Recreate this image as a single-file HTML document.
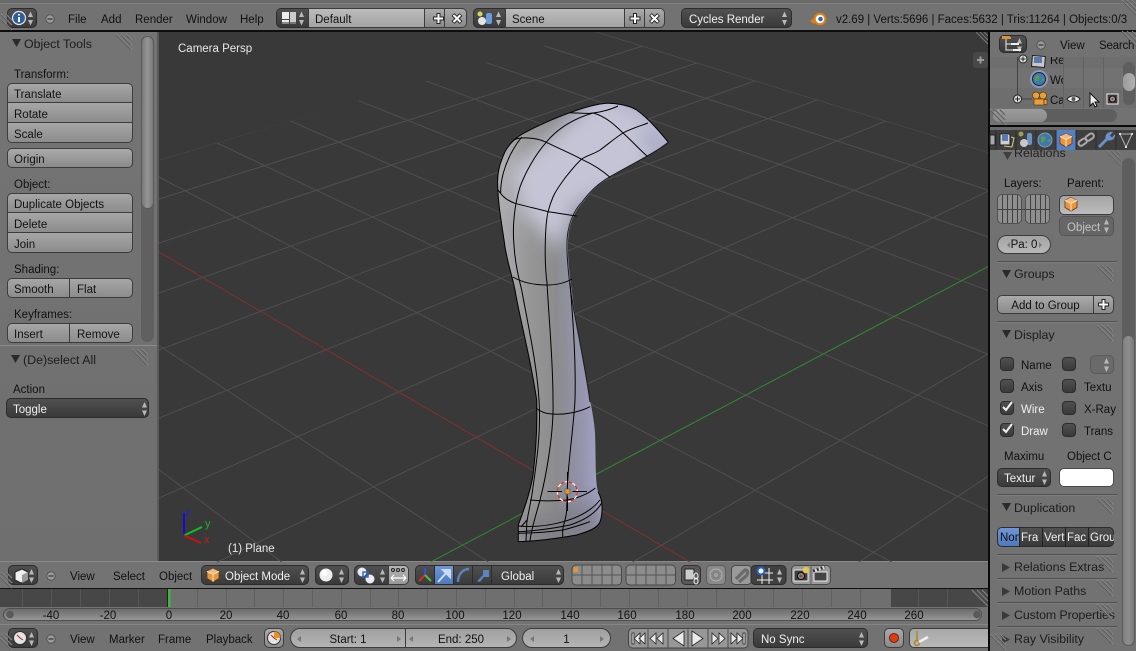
<!DOCTYPE html>
<html><head><meta charset="utf-8"><style>
html,body{margin:0;padding:0;width:1136px;height:651px;overflow:hidden;background:#727272}
#r{position:absolute;left:0;top:0;width:1136px;height:651px;overflow:hidden}
div,span{position:absolute;box-sizing:border-box}
.t{white-space:nowrap;font:11.5px/14px "Liberation Sans","DejaVu Sans",sans-serif;color:#111;margin-top:1px}
.h{font-size:12.4px;color:#1c1c1c}
.c{text-align:center}
.wh{color:#f0f0f0}
.w{background:linear-gradient(#aaaaaa,#8a8a8a);border:1px solid #3c3c3c;border-radius:5px}
.m{background:linear-gradient(#a6a6a6,#8c8c8c);border:1px solid #3c3c3c}
.d{background:linear-gradient(#505050,#3a3a3a);border:1px solid #2c2c2c;border-radius:5px}
.dv{left:997px;width:120px;background:#505050;border-bottom:1px solid #7e7e7e;height:2px}
</style></head><body><div id="r">
<!-- backgrounds -->
<div style="left:0;top:0;width:1136px;height:4px;background:#6a6a6a;border-bottom:1px solid #808080"></div>
<div style="left:0;top:30px;width:1136px;height:2px;background:#0e0e0e"></div>
<div style="left:0;top:32px;width:158px;height:530px;background:linear-gradient(#747474,#6f6f6f)"></div>
<div style="left:157px;top:32px;width:2px;height:530px;background:#5a5a5a"></div>
<div style="left:988px;top:30px;width:2px;height:621px;background:#0a0a0a"></div>
<div style="left:159px;top:32px;width:829px;height:530px;background:#393939"></div>
<div style="left:0;top:561px;width:988px;height:27px;background:#737373;border-top:1px solid #8a8a8a"></div>
<div style="left:0;top:588px;width:988px;height:1px;background:#111"></div>
<div style="left:0;top:589px;width:988px;height:18px;background:#6f6f6f"></div>
<div style="left:0;top:589px;width:168px;height:18px;background:#474747"></div>
<div style="left:891px;top:589px;width:97px;height:18px;background:#474747"></div>
<div style="left:0;top:607px;width:988px;height:18px;background:#737373"></div>
<div style="left:0;top:624px;width:988px;height:1px;background:#858585"></div>
<div style="left:3px;top:608px;width:979px;height:13px;border-radius:7px;background:linear-gradient(#6c6c6c,#959595);border:1px solid #4e4e4e"></div>
<div style="left:990px;top:32px;width:146px;height:94px;background:#727272"></div>
<div style="left:990px;top:57px;width:146px;height:11px;background:#6e6e6e"></div>
<div style="left:990px;top:68px;width:146px;height:20px;background:#727272"></div>
<div style="left:990px;top:88px;width:146px;height:20px;background:#6e6e6e"></div>
<div style="left:990px;top:125px;width:146px;height:2px;background:#0a0a0a"></div>
<div style="left:990px;top:127px;width:146px;height:24px;background:#6a6a6a"></div>
<div style="left:990px;top:130px;width:146px;height:20px;background:#3f3f3f"></div>
<div style="left:1056px;top:130px;width:20px;height:20px;background:#5680c2"></div>
<div style="left:990px;top:150px;width:146px;height:501px;background:#727272"></div>
<!-- scrollbars -->
<div style="left:141px;top:36px;width:13px;height:306px;border-radius:7px;background:#606060"></div>
<div style="left:141px;top:36px;width:13px;height:173px;border-radius:7px;background:linear-gradient(90deg,#787878,#949494,#7a7a7a);border:1px solid #5a5a5a"></div>
<div style="left:0;top:345px;width:157px;height:1px;background:#8c8c8c"></div>
<div style="left:1123px;top:62px;width:12px;height:43px;border-radius:6px;background:#5e5e5e"></div>
<div style="left:1123px;top:73px;width:12px;height:18px;border-radius:6px;background:linear-gradient(90deg,#9c9c9c,#b0b0b0)"></div>
<div style="left:993px;top:109px;width:124px;height:13px;border-radius:7px;background:#5e5e5e"></div>
<div style="left:993px;top:109px;width:54px;height:13px;border-radius:7px;background:linear-gradient(#9c9c9c,#8a8a8a)"></div>
<div style="left:1122px;top:158px;width:13px;height:488px;border-radius:7px;background:#5e5e5e"></div>
<div style="left:1122px;top:335px;width:13px;height:311px;border-radius:7px;background:linear-gradient(90deg,#808080,#8e8e8e,#7a7a7a);border:1px solid #5a5a5a"></div>

<!-- 3D view SVG -->
<svg style="position:absolute;left:159px;top:32px" width="829" height="530" viewBox="159 32 829 530">
<defs>
<clipPath id="g"><polygon points="594,31 1000,156 1000,600 159,600 159,160"/></clipPath>
<linearGradient id="b" gradientUnits="userSpaceOnUse" x1="498" y1="0" x2="604" y2="0"><stop offset="0" stop-color="#aeaeb2"/><stop offset=".3" stop-color="#969696"/><stop offset=".55" stop-color="#8c8c8e"/><stop offset=".8" stop-color="#9090a6"/><stop offset="1" stop-color="#a8a8c8"/></linearGradient>
<filter id="bl" x="-30%" y="-30%" width="160%" height="160%"><feGaussianBlur stdDeviation="9"/></filter>
<clipPath id="sil"><path d="M668.3,142.3 C660,132 648,118 636.7,110 C628,105 615,103 606.7,103.3 C595,104 580,109 570,112.7 C555,118 535,127 526.7,131.7 C515,137 508,146 505,151.7 C500,163 497,172 497.7,185 C498,205 502,225 505,246.7 C508,265 512,275 515,290 C520,320 530,355 536.7,400 C537,420 537,440 533.3,473 C531,490 524,510 518.3,525 L518.3,541.7 C540,541 560,538 576.7,535 C590,531 597,528 600,522 C603,513 603,500 598,491.7 C595,480 596,460 595,433 C594,420 592,410 590,400 C585,365 576,325 571.7,290 C569,270 567,250 568.3,236.7 C570,220 577,208 583.3,201.7 C592,190 600,183 610,177.3 C625,168 645,158 660,148.3 Z"/></clipPath>
</defs>
<g clip-path="url(#g)" stroke="#4f4f4f" stroke-width="1" fill="none">
<path d="M2533,-552L159,160M2533,-552L159,199M2533,-552L159,243M2533,-552L159,293M2533,-552L159,350M2533,-552L159,418M2533,-552L159,498M2533,-552L159,590M2533,-552L568,600M2533,-552L802,600"/>
<path d="M-1122,-496L1000,156M-1122,-496L1000,194M-1122,-496L1000,241M-1122,-496L1000,295M-1122,-496L1000,359M-1122,-496L1000,431M-1122,-496L1000,516.5M-1122,-496L964,600M-1122,-496L546,600M-1122,-496L332,600"/>
<path d="M-1122,-496L755,600" stroke="#843030"/>
<path d="M2533,-552L359,600" stroke="#2f8a2f"/>
</g>
<!-- mesh -->
<path d="M668.3,142.3 C660,132 648,118 636.7,110 C628,105 615,103 606.7,103.3 C595,104 580,109 570,112.7 C555,118 535,127 526.7,131.7 C515,137 508,146 505,151.7 C500,163 497,172 497.7,185 C498,205 502,225 505,246.7 C508,265 512,275 515,290 C520,320 530,355 536.7,400 C537,420 537,440 533.3,473 C531,490 524,510 518.3,525 L518.3,541.7 C540,541 560,538 576.7,535 C590,531 597,528 600,522 C603,513 603,500 598,491.7 C595,480 596,460 595,433 C594,420 592,410 590,400 C585,365 576,325 571.7,290 C569,270 567,250 568.3,236.7 C570,220 577,208 583.3,201.7 C592,190 600,183 610,177.3 C625,168 645,158 660,148.3 Z" fill="url(#b)"/>
<g clip-path="url(#sil)">
<path d="M510,170 L600,95 L680,130 L640,175 L575,205 L560,250 L520,210 Z" fill="#c4c4d6" filter="url(#bl)"/>
<path d="M640,120 L675,145 L650,160 Z" fill="#a8a8c4" filter="url(#bl)"/>
<path d="M566,240 L574,240 L596,420 L600,520 L586,520 Z" fill="#a4a4cc" filter="url(#bl)" opacity=".45"/>
<path d="M520,520 L600,500 L604,545 L515,548 Z" fill="#7c7c84" filter="url(#bl)" opacity=".7"/>
</g>
<g fill="none" stroke="#000" stroke-width="1" stroke-linejoin="round">
<path d="M668.3,142.3 C660,132 648,118 636.7,110 C628,105 615,103 606.7,103.3 C595,104 580,109 570,112.7 C555,118 535,127 526.7,131.7 C515,137 508,146 505,151.7 C500,163 497,172 497.7,185 C498,205 502,225 505,246.7 C508,265 512,275 515,290 C520,320 530,355 536.7,400 C537,420 537,440 533.3,473 C531,490 524,510 518.3,525 L518.3,541.7 C540,541 560,538 576.7,535 C590,531 597,528 600,522 C603,513 603,500 598,491.7"/>
<path d="M590,402 C585,365 576,325 570.5,290 C568,270 566,250 567.3,236.7 C569,220 576,208 582.3,201.7 C591,190 599,183 609,177.3 C625,168 645,158 660,148.3 L668.3,142.3" stroke="#1a1a1a"/>
<path d="M513.3,140 C520,137 535,137 545,141.7 C560,149 570,153 581.7,159.3 C592,164 602,170 610,177.3"/>
<path d="M593,113 C605,116 615,125 623,133 C632,141 640,150 647,156"/>
<path d="M570,112.700 C578,113 588,114 593,113 C602,112 612,109 618,106"/>
<path d="M593,113 C575,118 558,128 546.7,141.7 C535,155 525,173 520,187 C515,203 512,225 514,245 C515,262 518,275 521.7,290 C528,325 537,365 539,400 C541,430 537,460 533,487 C531,505 526,520 526.7,527 L526,541"/>
<path d="M648,123 C640,126 630,129 623,133 C615,138 607,145 600,150 C594,154 588,155 581.7,159 C575,165 570,172 565,178 C560,185 556,190 553,197 C550,204 549,208 548,212 C545,225 544,260 547,283 C549,320 553,360 553,400 C554,430 547,473 540,500 C536,515 531,530 530,541"/>
<path d="M521.7,137 C513,148 507,160 503.3,173 C501,182 500.5,188 500.7,193"/>
<path d="M498.3,190 C503,198 509,201 515,203.3 C525,206 538,209 548.3,211.7 C558,213 568,215 576.7,216"/>
<path d="M513,277 C523,283 535,285 547,285 C558,285 565,283 572,279"/>
<path d="M535.7,408 C541,412 546,414 552,414 C565,415 580,412 590,406.7"/>
<path d="M570,283 C573,320 576,360 575,400 C574,420 570,450 568.3,471.7 C567,490 567,500 566.7,510 C566,520 563,525 562.7,530 L562.7,538"/>
<path d="M530,500 C540,501 555,501 567,500 C578,498 588,494 595.3,488"/>
<path d="M518.3,526 C530,527 545,527 563.3,521.7 C580,517 592,510 600,500"/>
<path d="M518.3,531.7 C535,531 550,529 570,525 C585,520 596,513 601.7,503"/>
<path d="M518.3,533.3 C535,533 550,532 563,530 C575,527 583,524 590,521.7"/>
<path d="M521,527 L527,520"/>
</g>
<!-- 3d cursor -->
<circle cx="567.3" cy="491.7" r="10" fill="none" stroke="#fff" stroke-width="1.2"/>
<circle cx="567.3" cy="491.7" r="10" fill="none" stroke="#e02020" stroke-width="1.2" stroke-dasharray="4 4"/>
<path d="M547.5,491.5H562M572.5,491.5H587M567.5,472V486.5M567.5,496.5V511" stroke="#000" fill="none"/>
<rect x="565" y="489" width="5" height="5" fill="#e0943c" stroke="#553" stroke-width=".5"/>
<!-- axes widget -->
<path d="M184,535.5V513" stroke="#1010d0" stroke-width="2"/>
<path d="M184,535.5L202,527" stroke="#10c020" stroke-width="2"/>
<path d="M184,535.5L201,543" stroke="#d01010" stroke-width="2"/>
<!-- plus handle -->
<rect x="973" y="52" width="15" height="16" rx="3" fill="#484848"/>
<path d="M977,60H984M980.5,56.5V63.5" stroke="#9a9a9a" stroke-width="2"/>
<path d="M976,32L988,44M980,32L988,40M984,32L988,36" stroke="#777"/>
</svg>
<span class="t wh" style="left:178px;top:41px;color:#e8e8e8">Camera Persp</span>
<span class="t wh" style="left:228px;top:541px;color:#e8e8e8">(1) Plane</span>
<span class="t" style="left:185px;top:505px;color:#2020d0;font-size:11px">z</span>
<span class="t" style="left:205px;top:516px;color:#20b020;font-size:11px">y</span>
<span class="t" style="left:204px;top:532px;color:#c02020;font-size:11px">x</span>

<!-- top header -->
<div class="d" style="left:7px;top:8px;width:30px;height:20px"></div>
<span class="t" style="left:68px;top:12px">File</span><span class="t" style="left:101px;top:12px">Add</span><span class="t" style="left:135px;top:12px">Render</span><span class="t" style="left:186px;top:12px">Window</span><span class="t" style="left:240px;top:12px">Help</span>
<div class="d" style="left:276px;top:8px;width:33px;height:20px;border-radius:5px 0 0 5px"></div>
<div class="w" style="left:308px;top:8px;width:117px;height:20px;border-radius:0;background:linear-gradient(#bcbcbc,#a4a4a4)"></div>
<span class="t" style="left:315px;top:12px">Default</span>
<div class="w" style="left:424px;top:8px;width:21px;height:20px;border-radius:0"></div>
<div class="w" style="left:444px;top:8px;width:23px;height:20px;border-radius:0 5px 5px 0"></div>
<div class="d" style="left:473px;top:8px;width:33px;height:20px;border-radius:5px 0 0 5px"></div>
<div class="w" style="left:505px;top:8px;width:120px;height:20px;border-radius:0;background:linear-gradient(#bcbcbc,#a4a4a4)"></div>
<span class="t" style="left:512px;top:12px">Scene</span>
<div class="w" style="left:624px;top:8px;width:21px;height:20px;border-radius:0"></div>
<div class="w" style="left:644px;top:8px;width:21px;height:20px;border-radius:0 5px 5px 0"></div>
<div class="d" style="left:681px;top:8px;width:111px;height:20px"></div>
<span class="t wh" style="left:689px;top:12px">Cycles Render</span>
<span class="t" style="left:836px;top:12px;letter-spacing:-.01px">v2.69 | Verts:5696 | Faces:5632 | Tris:11264 | Objects:0/3</span>

<!-- left panel -->
<span class="t h" style="left:24px;top:36px">Object Tools</span>
<span class="t" style="left:14px;top:67px">Transform:</span>
<div class="m" style="left:7px;top:83px;width:126px;height:20px;border-radius:5px 5px 0 0"></div><span class="t" style="left:14px;top:87px">Translate</span>
<div class="m" style="left:7px;top:102px;width:126px;height:21px"></div><span class="t" style="left:14px;top:107px">Rotate</span>
<div class="m" style="left:7px;top:122px;width:126px;height:21px;border-radius:0 0 5px 5px"></div><span class="t" style="left:14px;top:127px">Scale</span>
<div class="w" style="left:7px;top:148px;width:126px;height:20px"></div><span class="t" style="left:14px;top:152px">Origin</span>
<span class="t" style="left:14px;top:177px">Object:</span>
<div class="m" style="left:7px;top:193px;width:126px;height:20px;border-radius:5px 5px 0 0"></div><span class="t" style="left:14px;top:197px">Duplicate Objects</span>
<div class="m" style="left:7px;top:212px;width:126px;height:21px"></div><span class="t" style="left:14px;top:217px">Delete</span>
<div class="m" style="left:7px;top:232px;width:126px;height:21px;border-radius:0 0 5px 5px"></div><span class="t" style="left:14px;top:237px">Join</span>
<span class="t" style="left:14px;top:262px">Shading:</span>
<div class="m" style="left:7px;top:278px;width:63px;height:20px;border-radius:5px 0 0 5px"></div><div class="m" style="left:69px;top:278px;width:64px;height:20px;border-radius:0 5px 5px 0"></div>
<span class="t" style="left:14px;top:282px">Smooth</span><span class="t" style="left:77px;top:282px">Flat</span>
<span class="t" style="left:14px;top:307px">Keyframes:</span>
<div class="m" style="left:7px;top:323px;width:63px;height:20px;border-radius:5px 0 0 5px"></div><div class="m" style="left:69px;top:323px;width:64px;height:20px;border-radius:0 5px 5px 0"></div>
<span class="t" style="left:14px;top:327px">Insert</span><span class="t" style="left:77px;top:327px">Remove</span>
<span class="t h" style="left:23px;top:352px">(De)select All</span>
<span class="t" style="left:13px;top:382px">Action</span>
<div class="d" style="left:6px;top:398px;width:143px;height:20px"></div><span class="t wh" style="left:13px;top:402px">Toggle</span>

<!-- 3D header -->
<div class="d" style="left:8px;top:565px;width:30px;height:20px"></div>
<span class="t" style="left:70px;top:569px">View</span><span class="t" style="left:113px;top:569px">Select</span><span class="t" style="left:159px;top:569px">Object</span>
<div class="d" style="left:201px;top:565px;width:108px;height:20px"></div><span class="t wh" style="left:225px;top:569px">Object Mode</span>
<div class="d" style="left:315px;top:565px;width:34px;height:20px"></div>
<div class="d" style="left:354px;top:565px;width:36px;height:20px;border-radius:5px 0 0 5px"></div>
<div class="w" style="left:388px;top:565px;width:21px;height:20px;border-radius:0 5px 5px 0;background:linear-gradient(#b4b4b4,#989898)"></div>
<div class="d" style="left:415px;top:565px;width:20px;height:20px;border-radius:5px 0 0 5px"></div>
<div style="left:434px;top:565px;width:20px;height:20px;background:linear-gradient(#6f97d6,#4f79bc);border:1px solid #2c2c2c"></div>
<div class="d" style="left:453px;top:565px;width:20px;height:20px;border-radius:0"></div>
<div class="d" style="left:472px;top:565px;width:20px;height:20px;border-radius:0"></div>
<div class="d" style="left:491px;top:565px;width:73px;height:20px;border-radius:0 5px 5px 0"></div><span class="t wh" style="left:501px;top:569px">Global</span>

<!-- timeline numbers -->
<span class="t c" style="left:31px;top:608px;width:40px">-40</span><span class="t c" style="left:88px;top:608px;width:40px">-20</span><span class="t c" style="left:149px;top:608px;width:40px">0</span><span class="t c" style="left:206px;top:608px;width:40px">20</span><span class="t c" style="left:263px;top:608px;width:40px">40</span><span class="t c" style="left:321px;top:608px;width:40px">60</span><span class="t c" style="left:378px;top:608px;width:40px">80</span><span class="t c" style="left:435px;top:608px;width:40px">100</span><span class="t c" style="left:492px;top:608px;width:40px">120</span><span class="t c" style="left:550px;top:608px;width:40px">140</span><span class="t c" style="left:607px;top:608px;width:40px">160</span><span class="t c" style="left:665px;top:608px;width:40px">180</span><span class="t c" style="left:722px;top:608px;width:40px">200</span><span class="t c" style="left:780px;top:608px;width:40px">220</span><span class="t c" style="left:837px;top:608px;width:40px">240</span><span class="t c" style="left:894px;top:608px;width:40px">260</span>

<!-- timeline header -->
<div class="d" style="left:8px;top:628px;width:30px;height:20px"></div>
<span class="t" style="left:70px;top:632px">View</span><span class="t" style="left:109px;top:632px">Marker</span><span class="t" style="left:158px;top:632px">Frame</span><span class="t" style="left:206px;top:632px">Playback</span>
<div class="w" style="left:264px;top:628px;width:20px;height:20px"></div>
<div class="w" style="left:290px;top:628px;width:116px;height:20px;border-radius:10px 0 0 10px;background:linear-gradient(#a0a0a0,#b4b4b4)"></div><span class="t c" style="left:290px;top:632px;width:116px">Start: 1</span>
<div class="w" style="left:405px;top:628px;width:112px;height:20px;border-radius:0 10px 10px 0;background:linear-gradient(#a0a0a0,#b4b4b4)"></div><span class="t c" style="left:405px;top:632px;width:112px">End: 250</span>
<div class="w" style="left:522px;top:628px;width:89px;height:20px;border-radius:10px;background:linear-gradient(#a0a0a0,#b4b4b4)"></div><span class="t c" style="left:522px;top:632px;width:89px">1</span>
<div class="d" style="left:753px;top:628px;width:115px;height:20px"></div><span class="t wh" style="left:761px;top:632px">No Sync</span>
<div class="w" style="left:884px;top:628px;width:20px;height:20px"></div>
<div class="w" style="left:909px;top:628px;width:79px;height:20px;border-radius:5px 0 0 5px;border-right:0;background:linear-gradient(#a8a8a8,#b8b8b8)"></div>

<!-- outliner -->
<div class="d" style="left:999px;top:35px;width:28px;height:18px"></div>
<span class="t" style="left:1060px;top:38px">View</span><span class="t" style="left:1099px;top:38px;letter-spacing:-.2px">Search</span>
<div style="left:990px;top:57px;width:73px;height:51px;overflow:hidden">
<span class="t" style="left:60px;top:-4px">Re</span><span class="t" style="left:60px;top:16px">Wo</span><span class="t" style="left:60px;top:36px">Ca</span>
</div>
<div style="left:1063px;top:57px;width:1px;height:51px;background:#626262"></div>
<div style="left:1083px;top:57px;width:1px;height:51px;background:#626262"></div>
<div style="left:1103px;top:57px;width:1px;height:51px;background:#626262"></div>

<!-- properties -->
<div style="left:990px;top:150px;width:130px;height:20px;overflow:hidden"><span class="t h" style="left:24px;top:-5px;color:#222">Relations</span></div>
<span class="t" style="left:1004px;top:176px">Layers:</span><span class="t" style="left:1067px;top:176px">Parent:</span>
<div class="w" style="left:997px;top:194px;width:25px;height:30px;background:repeating-linear-gradient(90deg,#8e8e8e 0 4px,#404040 4px 5px);border-color:#505050"></div>
<div class="w" style="left:1025px;top:194px;width:25px;height:30px;background:repeating-linear-gradient(90deg,#8e8e8e 0 4px,#404040 4px 5px);border-color:#505050"></div>
<div style="left:997px;top:209px;width:53px;height:1px;background:#444"></div>
<div class="w" style="left:1059px;top:195px;width:55px;height:20px;background:linear-gradient(#a4a4a4,#bcbcbc)"></div>
<div class="w" style="left:1059px;top:216px;width:55px;height:20px;background:#666;border-color:#555"></div><span class="t" style="left:1067px;top:220px;color:#c4c4c4">Object</span>
<div class="w" style="left:997px;top:235px;width:54px;height:19px;border-radius:10px;background:linear-gradient(#a4a4a4,#b8b8b8)"></div><span class="t c" style="left:997px;top:237px;width:54px">Pa: 0</span>
<div class="dv" style="top:261px"></div>
<span class="t h" style="left:1014px;top:266px">Groups</span>
<div class="w" style="left:997px;top:295px;width:97px;height:19px;border-radius:5px 0 0 5px"></div><span class="t c" style="left:997px;top:298px;width:97px">Add to Group</span>
<div class="w" style="left:1093px;top:295px;width:21px;height:19px;border-radius:0 5px 5px 0"></div>
<div class="dv" style="top:321px"></div>
<span class="t h" style="left:1014px;top:327px">Display</span>
<div class="d" style="left:1000px;top:357px;width:14px;height:14px;border-radius:4px"></div><span class="t" style="left:1021px;top:358px">Name</span>
<div class="d" style="left:1062px;top:357px;width:14px;height:14px;border-radius:4px"></div>
<div class="w" style="left:1090px;top:355px;width:24px;height:19px;background:#6a6a6a;border-color:#5a5a5a"></div>
<div class="d" style="left:1000px;top:379px;width:14px;height:14px;border-radius:4px"></div><span class="t" style="left:1021px;top:380px">Axis</span>
<div class="d" style="left:1062px;top:379px;width:14px;height:14px;border-radius:4px"></div><span class="t" style="left:1084px;top:380px">Textu</span>
<div class="d" style="left:1000px;top:401px;width:14px;height:14px;border-radius:4px"></div><span class="t wh" style="left:1021px;top:402px">Wire</span>
<div class="d" style="left:1062px;top:401px;width:14px;height:14px;border-radius:4px"></div><span class="t" style="left:1084px;top:402px">X-Ray</span>
<div class="d" style="left:1000px;top:423px;width:14px;height:14px;border-radius:4px"></div><span class="t wh" style="left:1021px;top:424px">Draw</span>
<div class="d" style="left:1062px;top:423px;width:14px;height:14px;border-radius:4px"></div><span class="t" style="left:1084px;top:424px">Trans</span>
<span class="t" style="left:1004px;top:449px">Maximu</span><span class="t" style="left:1067px;top:449px">Object C</span>
<div class="d" style="left:997px;top:468px;width:54px;height:19px"></div><span class="t wh" style="left:1004px;top:471px">Textur</span>
<div style="left:1059px;top:468px;width:55px;height:19px;background:#fff;border:1px solid #4a4a4a;border-radius:5px"></div>
<div class="dv" style="top:494px"></div>
<span class="t h" style="left:1014px;top:500px">Duplication</span>
<div class="d" style="left:997px;top:527px;width:117px;height:20px"></div>
<div style="left:998px;top:528px;width:21px;height:18px;background:linear-gradient(#6f97d6,#4f79bc);border-radius:4px 0 0 4px"></div>
<div style="left:1019px;top:527px;width:1px;height:20px;background:#222"></div><div style="left:1042px;top:527px;width:1px;height:20px;background:#222"></div><div style="left:1065px;top:527px;width:1px;height:20px;background:#222"></div><div style="left:1088px;top:527px;width:1px;height:20px;background:#222"></div>
<span class="t" style="left:1000px;top:530px;width:19px;overflow:hidden;color:#111">Non</span><span class="t wh" style="left:1021px;top:530px;width:20px;overflow:hidden">Fra</span><span class="t wh" style="left:1044px;top:530px;width:21px;overflow:hidden">Vert</span><span class="t wh" style="left:1067px;top:530px;width:21px;overflow:hidden">Fac</span><span class="t wh" style="left:1090px;top:530px;width:24px;overflow:hidden">Grou</span>
<div class="dv" style="top:554px"></div>
<span class="t h" style="left:1014px;top:559px">Relations Extras</span>
<div class="dv" style="top:578px"></div>
<span class="t h" style="left:1014px;top:583px">Motion Paths</span>
<div class="dv" style="top:602px"></div>
<span class="t h" style="left:1014px;top:607px;letter-spacing:-.1px">Custom Properties</span>
<div class="dv" style="top:626px"></div>
<span class="t h" style="left:1014px;top:631px">Ray Visibility</span>

<!-- icon overlay -->
<svg style="position:absolute;left:0;top:0" width="1136" height="651" viewBox="0 0 1136 651">
<defs>
<g id="ud"><path d="M0,4.500L2.500,-1L5,4.500ZM0,7.500L2.500,13L5,7.500Z"/></g>
<g id="min"><circle cx="0" cy="0" r="4.200" fill="#9a9a9a" stroke="#555"/><path d="M-2.500,0H2.500" stroke="#333" stroke-width="1.200"/></g>
<g id="grip" stroke="#8e8e8e" fill="none"><path d="M0,0L16,16M5,0L16,11M10,0L16,6"/><path d="M0,1L15,16M5,1L15,11M10,1L15,6" stroke="#5e5e5e"/></g>
<g id="cube"><path d="M0,-6.500L6,-3.500V3.500L0,7L-6,3.500V-3.500Z" fill="#e8953e" stroke="#5a3a18" stroke-width=".8"/><path d="M0,-6.500L6,-3.500L0,-.5L-6,-3.500Z" fill="#f4b878"/><path d="M-6,-3.500L0,-.5L6,-3.500M0,-.5V7" stroke="#fbe0bc" fill="none"/></g>
<g id="plus"><path d="M0,-5.500V5.500M-5.500,0H5.500" stroke="#222" stroke-width="4"/><path d="M0,-4.500V4.500M-4.500,0H4.500" stroke="#fff" stroke-width="2"/></g>
<g id="x"><path d="M-4,-4L4,4M-4,4L4,-4" stroke="#222" stroke-width="4"/><path d="M-3.500,-3.500L3.500,3.500M-3.500,3.500L3.500,-3.500" stroke="#fff" stroke-width="2"/></g>
<g id="clock"><circle r="6.500" fill="#e4e4e4" stroke="#333"/><path d="M0,0L-3,-3M0,0L3,2" stroke="#c02020"/></g>
<g id="chk"><path d="M-4,0L-1,3L5,-5" fill="none" stroke="#f2f2f2" stroke-width="2"/></g>
<g id="tri"><path d="M0,0H9L4.500,8Z" fill="#2a2a2a"/></g>
<g id="trr"><path d="M0,0L8,4.500L0,9Z" fill="#3a3a3a"/></g>
</defs>
<!-- panel triangles -->
<use href="#tri" x="12" y="39"/><use href="#tri" x="11" y="355"/><use href="#tri" x="1002" y="270"/><use href="#tri" x="1002" y="330"/><use href="#tri" x="1002" y="503"/><use href="#tri" x="1003" y="152" opacity=".7"/>
<use href="#trr" x="1002" y="563"/><use href="#trr" x="1002" y="587"/><use href="#trr" x="1002" y="611"/><use href="#trr" x="1002" y="635"/>
<!-- grips -->
<use href="#grip" x="116" y="34"/><use href="#grip" x="132" y="349"/><use href="#grip" x="1097" y="265"/><use href="#grip" x="1097" y="325"/><use href="#grip" x="1097" y="498"/><use href="#grip" x="1097" y="556"/><use href="#grip" x="1097" y="580"/><use href="#grip" x="1097" y="604"/><use href="#grip" x="1097" y="628"/><use href="#grip" x="1106" y="150" opacity=".6"/>
<use href="#grip" x="-4" y="14"/><use href="#grip" x="-4" y="572"/><use href="#grip" x="-4" y="634"/><use href="#grip" x="972" y="590"/><use href="#grip" x="990" y="109"/><use href="#grip" x="1122" y="31"/><use href="#grip" x="1122" y="0"/><use href="#grip" x="990" y="634"/>
<!-- minus -->
<use href="#min" x="50" y="19"/><use href="#min" x="1041" y="45"/><use href="#min" x="51" y="576"/><use href="#min" x="51" y="639"/>
<!-- info -->
<circle cx="19" cy="18" r="6.500" fill="#2d5e9e" stroke="#e6e6e6" stroke-width="1.200"/><path d="M19,14v1.500M19,17v5" stroke="#fff" stroke-width="2"/>
<g fill="#b8b8b8"><use href="#ud" x="28" y="12.500"/><use href="#ud" x="299" y="12.500"/><use href="#ud" x="496" y="12.500"/><use href="#ud" x="782" y="12.500"/><use href="#ud" x="142" y="403"/><use href="#ud" x="1017" y="39"/><use href="#ud" x="29" y="570"/><use href="#ud" x="300" y="570"/><use href="#ud" x="339" y="570"/><use href="#ud" x="380" y="570"/><use href="#ud" x="556" y="570"/><use href="#ud" x="29" y="633"/><use href="#ud" x="859" y="633"/><use href="#ud" x="1042" y="472"/><use href="#ud" x="1104" y="220"/><use href="#ud" x="1104" y="359"/></g>
<!-- layout -->
<g fill="#eee"><rect x="282" y="12" width="7" height="7"/><rect x="282" y="20" width="7" height="4"/><rect x="290" y="12" width="6" height="12" fill="#ccc"/></g>
<path d="M282,23h7M290,23h6" stroke="#222"/>
<!-- scene icon -->
<circle cx="480" cy="14" r="2.500" fill="#d8d858"/><rect x="486" y="13" width="6" height="11" rx="2" fill="#6a9ad8"/><circle cx="482" cy="21" r="4" fill="#e4e4e4"/>
<!-- plus/x -->
<use href="#plus" x="438.500" y="18.500"/><use href="#x" x="457" y="18.500"/><use href="#plus" x="635" y="18.500"/><use href="#x" x="654.500" y="18.500"/>
<!-- blender logo -->
<path d="M810,21L816,17L813,15.500H818L820,12.500L824,14L814,24Z" fill="#e87d0d"/>
<circle cx="820" cy="19" r="5.300" fill="#fff" stroke="#e87d0d" stroke-width="2"/><circle cx="820.500" cy="19" r="2.300" fill="#2d6aa8"/>
<!-- 3D header icons -->
<path d="M22,569L28,572V580L21,583L15,580V572Z" fill="#eee" stroke="#222"/><path d="M22,575V583L28,580V572Z" fill="#999"/>
<use href="#cube" x="213" y="575"/>
<circle cx="326" cy="575" r="6.500" fill="#eee"/><circle cx="324.500" cy="573" r="3" fill="#fff"/>
<circle cx="362" cy="572" r="4.500" fill="#ececec"/><circle cx="370" cy="579" r="4.500" fill="#ececec"/><rect x="363" y="572" width="5" height="5" fill="none" stroke="#2060d0" stroke-width="1.400"/>
<g fill="none" stroke="#222"><circle cx="393" cy="570" r="1.500"/><circle cx="398" cy="570" r="1.500"/><circle cx="403" cy="570" r="1.500"/></g>
<path d="M391,578H406M391,578l3,-3M391,578l3,3M406,578l-3,-3M406,578l-3,3" stroke="#fff" stroke-width="1.200" fill="none"/>
<path d="M425,575V568" stroke="#3050e0" stroke-width="2" fill="none"/><path d="M425,575L419,581" stroke="#d03030" stroke-width="2"/><path d="M425,575L431,581" stroke="#50c030" stroke-width="2"/>
<path d="M438,582L447,572M443,570H450V577Z" stroke="#c8dcf8" stroke-width="2" fill="#c8dcf8"/>
<path d="M458,582C458,574 463,569 469,569" stroke="#5a84c0" stroke-width="2.400" fill="none"/>
<path d="M477,581L483,575V570H489V577H484L480,582Z" fill="#5a84c0"/>
<!-- layers -->
<g fill="#8c8c8c" stroke="#484848"><rect x="572" y="565" width="49.500" height="20" rx="4"/><rect x="626" y="565" width="49.500" height="20" rx="4"/></g>
<path d="M582,565v20M592,565v20M602,565v20M612,565v20M636,565v20M646,565v20M656,565v20M666,565v20M572,575h49M626,575h49" stroke="#555"/>
<rect x="573.500" y="567" width="4.500" height="5" fill="#e49438"/>
<!-- lock, circle, magnet, snap -->
<rect x="681.500" y="565.500" width="19" height="19" rx="4" fill="#595959" stroke="#333"/><rect x="685" y="569" width="9" height="11" fill="#ccc" stroke="#222"/><ellipse cx="696" cy="576" rx="2" ry="3" fill="none" stroke="#eee"/><ellipse cx="696" cy="581" rx="2" ry="3" fill="none" stroke="#eee"/>
<rect x="706.500" y="565.500" width="19" height="19" rx="4" fill="#8a8a8a" stroke="#5c5c5c"/><circle cx="716" cy="575" r="6" fill="none" stroke="#b0b0b0"/><circle cx="716" cy="575" r="3" fill="#9e9e9e" stroke="#777"/>
<rect x="731.500" y="565.500" width="20" height="19" rx="4" fill="#9a9a9a" stroke="#4a4a4a"/><path d="M736,579L745,570C749,570 748,575 745,577L739,582" stroke="#6a6a6a" stroke-width="3.200" fill="none"/>
<rect x="751" y="565.500" width="35" height="19" rx="4" fill="#404040" stroke="#2c2c2c"/><path d="M757,573H773M757,580H773M762,568V584M769,568V584" stroke="#eee"/><circle cx="761" cy="571" r="3.500" fill="#fff" stroke="#2060d0" stroke-width="2"/>
<use href="#ud" x="777" y="570" fill="#b8b8b8"/>
<rect x="791.500" y="565.500" width="39" height="19" rx="4" fill="#9a9a9a" stroke="#4a4a4a"/><path d="M811,565v20" stroke="#5c5c5c"/>
<rect x="794" y="570" width="14" height="11" fill="#3c3c3c" stroke="#e8e8e8"/><circle cx="801" cy="576" r="3.500" fill="#888" stroke="#111"/><circle cx="801" cy="576" r="1.300" fill="#d02020"/><circle cx="806" cy="570" r="3.300" fill="#e0c850"/>
<rect x="814" y="572" width="13" height="9" fill="#444" stroke="#eee"/><path d="M813,571L825,567" stroke="#ddd" stroke-width="3"/><path d="M813,571L825,567" stroke="#333" stroke-width="3" stroke-dasharray="2 2"/>
<!-- timeline ticks -->
<path d="M22.500,589v18M51.500,589v18M80.500,589v18M109.500,589v18M138.500,589v18M197.500,589v18M226.500,589v18M254.500,589v18M283.500,589v18M312.500,589v18M341.500,589v18M370.500,589v18M398.500,589v18M427.500,589v18M456.500,589v18M485.500,589v18M514.500,589v18M542.500,589v18M571.500,589v18M600.500,589v18M629.500,589v18M658.500,589v18M687.500,589v18M716.500,589v18M744.500,589v18M773.500,589v18M802.500,589v18M831.500,589v18M860.500,589v18M918.500,589v18M947.500,589v18" stroke="#5c5c5c" opacity=".75"/>
<rect x="168" y="589" width="2.500" height="18" fill="#3fb43f"/><rect x="167" y="589" width="1" height="18" fill="#222"/>
<circle cx="10" cy="614.500" r="3.800" fill="#5a5a5a"/><circle cx="977" cy="614.500" r="3.800" fill="#5a5a5a"/>
<!-- timeline header icons -->
<use href="#clock" x="20" y="638"/>
<use href="#clock" x="274" y="638"/><path d="M274,638V631.500A6.500,6.500 0 0 1 280.500,638Z" fill="#e8941e"/>
<g fill="#777"><path d="M301,636l-4,3l4,3ZM397,636l4,3l-4,3ZM413,636l-4,3l4,3ZM507,636l4,3l-4,3ZM534,636l-4,3l4,3ZM600,636l4,3l-4,3Z"/></g>
<!-- transport -->
<rect x="628.500" y="628.500" width="119.500" height="19.500" rx="4" fill="#979797" stroke="#444"/>
<path d="M648,628v20M668,628v20M688,628v20M708,628v20M728,628v20" stroke="#4e4e4e"/>
<g fill="#eaeaea" stroke="#222" stroke-width=".8">
<path d="M632,633h2v11h-2ZM640,633v11l-6,-5.500ZM645,633v11l-6,-5.500Z"/>
<path d="M656,633v11l-6,-5.500ZM663,633v11l-6,-5.500Z"/>
<path d="M684,631v15l-11,-7.500Z"/><path d="M692,631l11,7.500l-11,7.500Z"/>
<path d="M712,633v11l6,-5.500ZM719,633v11l6,-5.500Z"/>
<path d="M731,633v11l6,-5.500ZM737,633v11l6,-5.500ZM743,633h2v11h-2Z"/>
</g>
<circle cx="894" cy="638" r="4.500" fill="#e03c10" stroke="#622"/>
<circle cx="917" cy="643" r="2.500" fill="none" stroke="#a88a20" stroke-width="1.500"/><path d="M917,640V631" stroke="#a88a20" stroke-width="1.500"/><path d="M919,642L928,637" stroke="#f0f0f0" stroke-width="2.500"/>
<!-- outliner icons -->
<path d="M1003,38H1011M1006,38V50H1018M1006,44H1015" stroke="#eee" fill="none"/><rect x="1002" y="36" width="8" height="3" fill="#e09030"/><rect x="1011" y="43" width="8" height="2" fill="#eee"/><rect x="1013" y="49" width="8" height="2" fill="#eee"/>
<path d="M1017.500,57V99H1032" stroke="#444" fill="none"/>
<g><circle cx="1023" cy="59" r="4" fill="#ddd" stroke="#222"/><path d="M1020.500,59h5M1023,56.500v5" stroke="#222"/></g>
<rect x="1032" y="56" width="13" height="11" fill="#c8c8c8" stroke="#222" transform="rotate(5 1039 61)"/><rect x="1034" y="57" width="8" height="6" fill="#5a7ab0"/>
<circle cx="1039" cy="79" r="9" fill="#8a9ab8"/><circle cx="1039" cy="79" r="6.500" fill="#3c7ab0" stroke="#223"/><path d="M1035,76c3,-2 6,0 4,3c-2,3 -3,4 -4,1ZM1041,80l3,-2l0,3z" fill="#5a9a50"/>
<g><circle cx="1017.500" cy="99" r="4" fill="#ddd" stroke="#222"/><path d="M1015,99h5M1017.500,96.500v5" stroke="#222"/></g>
<g fill="#e8a038" stroke="#603a10" stroke-width=".7"><circle cx="1036" cy="95.500" r="3.500"/><circle cx="1043" cy="95.500" r="3.500"/><rect x="1034" y="99" width="10" height="6"/><path d="M1044,100l3,-1v6l-3,-1Z"/></g>
<path d="M1067,99C1070,95 1077,95 1080,99C1077,103 1070,103 1067,99Z" fill="#eee" stroke="#222"/><circle cx="1073.500" cy="99" r="2" fill="#555"/>
<path d="M1090,93V106L1093,103L1095,107L1097,106L1095,102H1099Z" fill="#eee" stroke="#111"/>
<rect x="1107" y="94" width="11" height="10" fill="#3c3c3c" stroke="#eee"/><circle cx="1112.500" cy="99" r="3" fill="#999" stroke="#111"/><circle cx="1112.500" cy="99" r="1" fill="#d02020"/>
<!-- tabs -->
<path d="M996,130v20M1016,130v20M1036,130v20M1056,130v20M1076,130v20M1096,130v20M1116,130v20" stroke="#2c2c2c"/>
<rect x="990" y="135" width="5" height="10" fill="#aaa" stroke="#222"/>
<rect x="1000" y="134" width="10" height="11" fill="#d0d0d0" stroke="#222"/><rect x="1002" y="134" width="6" height="7" fill="#5a7ab0"/><path d="M1011,137l3,1l-2,9l-8,-1" stroke="#e0c880" fill="none"/>
<circle cx="1021" cy="134" r="2.500" fill="#b8b85a" opacity=".8"/><rect x="1027" y="133" width="5" height="12" rx="2" fill="#6a92c8"/><circle cx="1024" cy="143" r="4" fill="#c8c8c8"/>
<circle cx="1045" cy="140" r="7" fill="#3c78b0" stroke="#8a98b4"/><path d="M1041,137c3,-2 6,0 4,3c-2,3 -3,4 -4,1ZM1047,141l3,-2l0,3z" fill="#5a9a50"/>
<use href="#cube" x="1066" y="140"/>
<g fill="none" stroke="#aaa" stroke-width="2"><rect x="1078" y="140" width="9" height="5" rx="2.500" transform="rotate(-35 1082 142)"/><rect x="1085" y="135" width="9" height="5" rx="2.500" transform="rotate(-35 1089 137)"/></g>
<path d="M1099,147L1108,138" stroke="#6a92c8" stroke-width="3" fill="none"/><path d="M1106,140C1104,135 1108,131 1113,132L1110,135.500L1112,137.500L1115,134C1116,138 1112,142 1106,140Z" fill="#6a92c8"/>
<path d="M1120,134L1132,134L1126,147Z" fill="none" stroke="#b0b0b0"/><g fill="#ddd"><rect x="1119" y="133" width="2" height="2"/><rect x="1131" y="133" width="2" height="2"/><rect x="1125" y="146" width="2" height="2"/></g>
<!-- properties icons -->
<use href="#cube" x="1071" y="204"/>
<path d="M1010,242l-3,3l3,3ZM1039,242l3,3l-3,3Z" fill="#7a7a7a"/>
<use href="#plus" x="1103.500" y="304.500"/>
<use href="#chk" x="1007" y="407"/><use href="#chk" x="1007" y="429"/>
</svg>
</div></body></html>
